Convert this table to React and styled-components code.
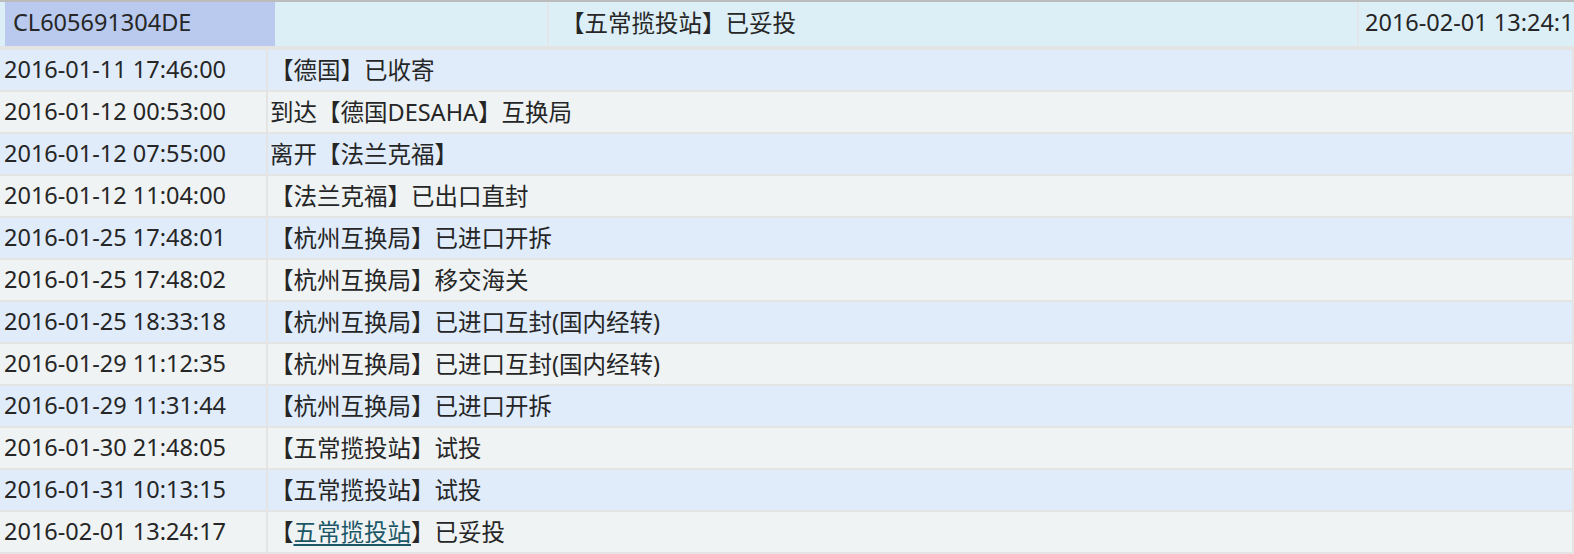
import React from "react";
import styled, { createGlobalStyle } from "styled-components";

const GlobalStyle = createGlobalStyle`
  html, body {
    margin: 0;
    padding: 0;
    background: #e4e4e4;
  }
  body {
    font-family: "Noto Sans", "Noto Sans CJK SC", sans-serif;
    font-size: 23.5px;
    color: #262626;
  }
`;

const Page = styled.div`
  width: 1574px;
  height: 554px;
  overflow: hidden;
  background: #e4e4e4;
`;

const HeaderBar = styled.div`
  display: flex;
  height: 44px;
  border-top: 2px solid #bcbcbc;
  padding-left: 5px;
  background: #dceef6;
  white-space: nowrap;
`;

const HeaderCell = styled.div`
  display: flex;
  align-items: center;
  flex: ${(p) => p.$flex || "none"};
  width: ${(p) => (p.$width ? p.$width + "px" : "auto")};
  padding-left: ${(p) => p.$pad || 0}px;
  padding-bottom: 4px;
  background: ${(p) => (p.$active ? "#b9caee" : "transparent")};
  border-left: ${(p) => (p.$divider ? "2px solid #e3e7e9" : "none")};
  overflow: hidden;
  box-sizing: border-box;
`;

const List = styled.div`
  display: grid;
  grid-template-columns: 266px 1fr;
  column-gap: 2px;
  row-gap: 2px;
  margin-top: 4px;
  padding-right: 2px;
`;

const Cell = styled.div`
  display: flex;
  align-items: center;
  height: 40px;
  box-sizing: border-box;
  padding-left: ${(p) => p.$pad}px;
  padding-bottom: 3px;
  background: ${(p) => (p.$odd ? "#e0ecfa" : "#eff3f4")};
  white-space: nowrap;
  overflow: hidden;
`;

const Link = styled.a`
  color: #1b5766;
  text-decoration: underline;
  text-underline-offset: 3px;
  cursor: pointer;
`;

const rows = [
  ["2016-01-11 17:46:00", "【德国】已收寄"],
  ["2016-01-12 00:53:00", "到达【德国DESAHA】互换局"],
  ["2016-01-12 07:55:00", "离开【法兰克福】"],
  ["2016-01-12 11:04:00", "【法兰克福】已出口直封"],
  ["2016-01-25 17:48:01", "【杭州互换局】已进口开拆"],
  ["2016-01-25 17:48:02", "【杭州互换局】移交海关"],
  ["2016-01-25 18:33:18", "【杭州互换局】已进口互封(国内经转)"],
  ["2016-01-29 11:12:35", "【杭州互换局】已进口互封(国内经转)"],
  ["2016-01-29 11:31:44", "【杭州互换局】已进口开拆"],
  ["2016-01-30 21:48:05", "【五常揽投站】试投"],
  ["2016-01-31 10:13:15", "【五常揽投站】试投"],
];

export default function App() {
  return (
    <Page>
      <GlobalStyle />
      <HeaderBar>
        <HeaderCell $active $width={270} $pad={8}>
          CL605691304DE
        </HeaderCell>
        <HeaderCell $width={272} />
        <HeaderCell $divider $flex="1" $pad={12}>
          【五常揽投站】已妥投
        </HeaderCell>
        <HeaderCell $divider $width={217} $pad={6}>
          2016-02-01 13:24:17
        </HeaderCell>
      </HeaderBar>
      <List>
        {rows.map(([time, text], i) => (
          <React.Fragment key={time}>
            <Cell $odd={i % 2 === 0} $pad={4}>
              {time}
            </Cell>
            <Cell $odd={i % 2 === 0} $pad={2}>
              {text}
            </Cell>
          </React.Fragment>
        ))}
        <Cell $odd={false} $pad={4}>
          2016-02-01 13:24:17
        </Cell>
        <Cell $odd={false} $pad={2}>
          【<Link>五常揽投站</Link>】已妥投
        </Cell>
      </List>
    </Page>
  );
}
